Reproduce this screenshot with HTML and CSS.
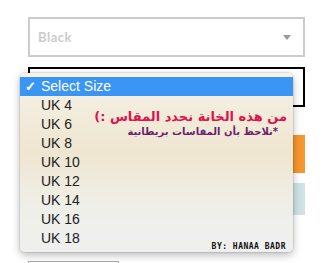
FILE: index.html
```html
<!DOCTYPE html>
<html lang="en">
<head>
  <meta charset="UTF-8">
  <meta name="viewport" content="width=device-width, initial-scale=1.0">
  <title>Select Size</title>
  <link rel="stylesheet" href="styles.css">
</head>
<body>
  <div class="page">
    <!-- Colour select -->
    <div class="field field-color">
      <span class="field-value">Black</span>
      <span class="field-arrow"></span>
    </div>

    <!-- Size select (open) -->
    <div class="field field-size"></div>

    <div class="cart-button"></div>
    <div class="info-box"></div>
    <div class="qty-box"></div>

    <!-- Native-looking dropdown menu -->
    <div class="menu">
      <div class="menu-item selected"><span class="check">✓</span>Select Size</div>
      <div class="menu-item">UK 4</div>
      <div class="menu-item">UK 6</div>
      <div class="menu-item">UK 8</div>
      <div class="menu-item">UK 10</div>
      <div class="menu-item">UK 12</div>
      <div class="menu-item">UK 14</div>
      <div class="menu-item">UK 16</div>
      <div class="menu-item">UK 18</div>

      <div class="note" dir="rtl">
        <div class="note-main">من هذه الخانة نحدد المقاس :)</div>
        <div class="note-sub">*نلاحظ بأن المقاسات بريطانية</div>
      </div>
      <div class="credit">BY: HANAA BADR</div>
    </div>
  </div>
</body>
</html>
```
FILE: styles.css
```css
/* General body styling */
body {
  margin: 0;
  background-color: #ffffff;
  font-family: 'Liberation Sans', Arial, sans-serif;
  color: #222;
}

.page {
  position: relative;
  width: 277px;
  padding: 17px 0 0 28px;
  display: flex;
  flex-direction: column;
}

/* Select boxes */
.field {
  box-sizing: border-box;
  height: 40px;
  display: flex;
  align-items: center;
  justify-content: space-between;
}

.field-color {
  border: 2px solid #cccccc;
  padding: 0 12px 0 8px;
}

.field-value {
  font-family: Lato, 'Open Sans', sans-serif;
  font-weight: 700;
  font-size: 13px;
  letter-spacing: 0.5px;
  color: #cccccc;
}

.field-arrow {
  width: 0;
  height: 0;
  border-left: 4px solid transparent;
  border-right: 4px solid transparent;
  border-top: 5px solid #999999;
}

.field-size {
  margin-top: 10px;
  border: 2px solid #000000;
}

/* Things behind the menu */
.cart-button {
  margin-top: 28px;
  height: 38px;
  background-color: #f7962e;
}

.info-box {
  margin-top: 10px;
  height: 32px;
  background-color: #cfe3e7;
}

.qty-box {
  margin-top: 46px;
  width: 91px;
  height: 2px;
  box-sizing: border-box;
  border: 1px solid #aaaaaa;
  border-bottom: none;
}

/* Dropdown menu */
.menu {
  position: absolute;
  left: 20px;
  top: 73px;
  width: 273px;
  height: 179px;
  box-sizing: border-box;
  padding-top: 4px;
  border-radius: 5px;
  background: linear-gradient(to bottom, #f6f3ea 0%, #f1ebd9 25%, #efe6d1 45%, #efefe9 75%, #efefef 100%);
  box-shadow: 0 3px 9px rgba(0, 0, 0, 0.28), 0 0 0 1px rgba(0, 0, 0, 0.08);
}

.menu-item {
  height: 19px;
  line-height: 19px;
  padding-left: 21px;
  font-size: 14px;
  color: #222;
}

.menu-item.selected {
  position: relative;
  background-color: #3b95f4;
  color: #ffffff;
}

.check {
  position: absolute;
  left: 5px;
  font-size: 13px;
  font-weight: 700;
}

/* Arabic annotation */
.note {
  position: absolute;
  top: 36px;
  right: 0;
  font-family: 'DejaVu Sans', sans-serif;
  font-weight: 700;
}

.note-main {
  padding-right: 6px;
  font-size: 13px;
  line-height: 16px;
  color: #e0124c;
}

.note-sub {
  padding-right: 15px;
  font-size: 10px;
  line-height: 14px;
  color: #6b1f6e;
}

.credit {
  position: absolute;
  right: 7px;
  bottom: 1px;
  font-family: 'DejaVu Sans Mono', monospace;
  font-weight: 700;
  font-size: 8px;
  letter-spacing: 0.5px;
  color: #111;
}
```
